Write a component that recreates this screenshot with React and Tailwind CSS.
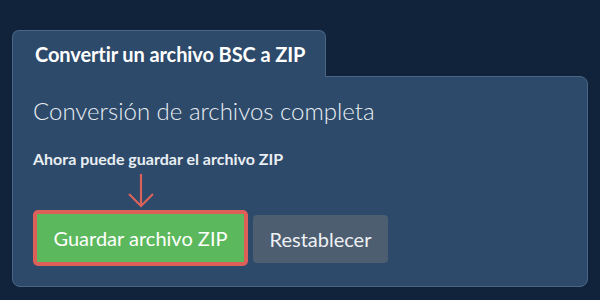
function DownArrow() {
  return (
    <svg width="30" height="36" viewBox="0 0 30 36" className="block">
      <path
        d="M15 1 V33 M3 21 L15 33 L27 21"
        fill="none"
        stroke="#d9625c"
        strokeWidth="2.2"
      />
    </svg>
  )
}

export default function App() {
  return (
    <div
      className="h-[300px] w-[600px] bg-[#11233a] px-[12px] pt-[30px]"
      style={{fontFamily: 'Lato, "Open Sans", sans-serif'}}
    >
      {/* tab header */}
      <div className="relative z-10 -mb-px flex h-[47px] w-[314px] items-center rounded-t-[7px] border border-b-0 border-[#4a6586] bg-[#2d4a6a] pl-[22px]">
        <span className="text-[20px] font-bold tracking-[-0.1px] text-white">
          Convertir un archivo BSC a ZIP
        </span>
      </div>

      {/* panel */}
      <div className="h-[211px] rounded-b-[8px] rounded-tr-[8px] border border-[#4a6586] bg-[#2d4a6a] px-[20px] pt-[20px]">
        <h2 className="text-[24px] leading-[1.2] font-light text-[#e9eef3]">
          Conversión de archivos completa
        </h2>
        <p className="mt-[23px] text-[16px] leading-[1.2] font-bold text-[#e9eef3]">
          Ahora puede guardar el archivo ZIP
        </p>

        <div className="mt-[5px] flex items-end gap-[5px]">
          <div className="flex flex-col items-center">
            <DownArrow />
            <div className="mt-[1px] rounded-[5px] border-4 border-[#dc5f58]">
              <button className="flex h-[48px] w-[207px] items-center justify-center bg-[#5cb85c] text-[20px] text-white">
                Guardar archivo ZIP
              </button>
            </div>
          </div>
          <button className="mb-[3px] flex h-[48px] w-[135px] items-center justify-center rounded-[4px] bg-[#4d5e71] text-[20px] text-[#eef1f4]">
            Restablecer
          </button>
        </div>
      </div>
    </div>
  )
}
